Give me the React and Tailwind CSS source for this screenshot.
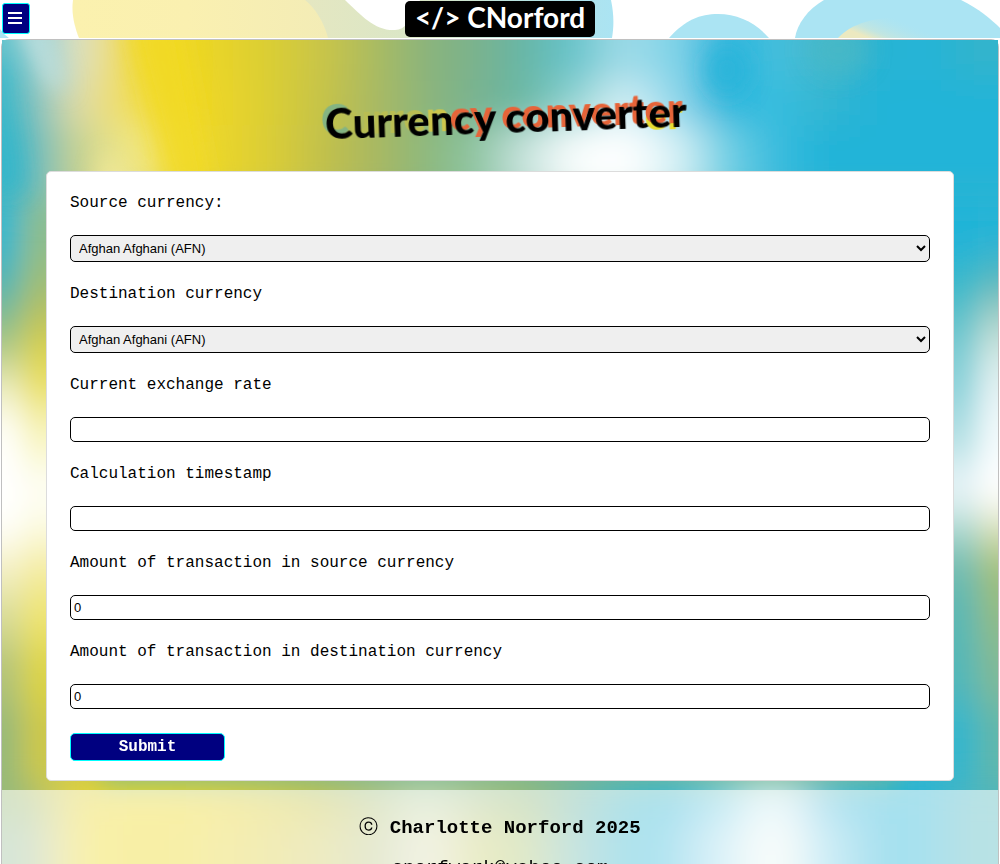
import React from "react";

const topRows = [
  {
    y: -60,
    h: 100,
    colors: ["#62c2cc", "#dfe2c4", "#f0da40", "#f0d924", "#e6d32c", "#d8cd36", "#c8c448", "#a9bb60", "#8ab47c", "#7ab28c", "#66b6a6", "#66c4cc", "#a0dce8", "#80d4e8", "#26b4dc", "#44c0de", "#44b8cc", "#2ab4d2", "#22b4d8", "#30b4cc"],
  },
  {
    y: 40,
    h: 45,
    colors: ["#58bcc4", "#e0dca8", "#f0de58", "#f2da20", "#ead42c", "#d8cd36", "#c4c24a", "#a9b962", "#8cb57a", "#78b290", "#68b8a4", "#90d4d4", "#d4eff5", "#90d8ea", "#28b6dc", "#38bee0", "#34b6d0", "#24b4d8", "#22b4d8", "#22b4d8"],
  },
  {
    y: 85,
    h: 75,
    colors: ["#40b8c6", "#c4d090", "#f0e88c", "#f2de38", "#e8d42a", "#d8cc38", "#c0c04c", "#a9b860", "#8cb87c", "#8cc4a0", "#c4e2dc", "#f8fdfd", "#ffffff", "#d8f2f6", "#70d0e4", "#38bcde", "#24b4d8", "#22b4d8", "#22b4d8", "#22b4d8"],
  },
];

const bottomRows = [
  {
    y: 740,
    h: 40,
    colors: ["#98ba78", "#e8d630", "#f2da20", "#f0d924", "#ead42c", "#dacd38", "#c6c344", "#b4c47c", "#c8dab0", "#b0c688", "#98ba70", "#68b4a0", "#38b6c8", "#2cb6d8", "#70d0e4", "#dcf4f8", "#48c0de", "#22b4d8", "#24b4d6", "#50b6bc"],
  },
  {
    y: 780,
    h: 120,
    colors: ["#9cc09c", "#eedb2e", "#ecd820", "#ecd820", "#e6d43a", "#dccf4c", "#d2ce68", "#bcc88c", "#e0e2c0", "#ccd070", "#b0c874", "#70bcb0", "#30b6d0", "#40bede", "#a8e0f0", "#f8fcf4", "#80d4ea", "#22b4d8", "#24b4d6", "#50b6bc"],
  },
];

const sides = [
  [130, 90, "#3ab8cc", "#8cbd90", "#22b4d8", "#26b4d6"],
  [220, 40, "#54b6b4", "#9cbe78", "#38b8ca", "#54b8bc"],
  [260, 35, "#84bc8c", "#bcc25c", "#60c2ca", "#a8d2c8"],
  [295, 35, "#b8cc84", "#dcd450", "#80cdd4", "#d0e8e4"],
  [330, 40, "#f0efc0", "#ece26c", "#90d4dc", "#e4f2f4"],
  [370, 50, "#fffffa", "#f8f5c0", "#b4e0e4", "#f2fafc"],
  [420, 50, "#ffffff", "#fefef4", "#e8f4f8", "#ffffff"],
  [470, 35, "#fffffa", "#fcfbe0", "#a8d8d0", "#d8e0b4"],
  [505, 45, "#f4f0c4", "#f4ecA0", "#70bcb0", "#a0c07c"],
  [550, 50, "#d8dc98", "#eee470", "#5cb8b4", "#90bc88"],
  [600, 60, "#b4c478", "#dcd448", "#54b8b8", "#80ba98"],
  [660, 140, "#98ba78", "#ccc84c", "#34b6cc", "#60b8ac"],
];

function Backdrop() {
  return (
    <svg
      className="absolute inset-0 -z-10 h-full w-full"
      viewBox="0 0 1000 860"
      preserveAspectRatio="none"
      aria-hidden="true"
    >
      <defs>
        <filter id="soft" x="-10%" y="-20%" width="120%" height="140%">
          <feGaussianBlur stdDeviation="23 17" />
        </filter>
        <filter id="softSide" x="-10%" y="-10%" width="120%" height="120%">
          <feGaussianBlur stdDeviation="13 20" />
        </filter>
        <filter id="glow" x="-50%" y="-50%" width="200%" height="200%">
          <feGaussianBlur stdDeviation="11" />
        </filter>
      </defs>
      <rect width="1000" height="860" fill="#7cb894" />
      <g filter="url(#softSide)">
        {sides.map(([y, h, a, b, c, d]) => (
          <g key={y}>
            <rect x="-60" y={y} width="80" height={h + 1} fill={a} />
            <rect x="20" y={y} width="80" height={h + 1} fill={b} />
            <rect x="900" y={y} width="80" height={h + 1} fill={c} />
            <rect x="980" y={y} width="80" height={h + 1} fill={d} />
          </g>
        ))}
      </g>
      {[topRows, bottomRows].map((rows, n) => (
        <g key={n} filter="url(#soft)">
          {rows.map((row) =>
            row.colors.map((c, i) => (
              <rect
                key={row.y + "-" + i}
                x={i === 0 ? -80 : i * 50}
                y={row.y}
                width={i === 0 ? 131 : i === 19 ? 140 : 51}
                height={row.h + 1}
                fill={c}
              />
            ))
          )}
        </g>
      ))}
      <g filter="url(#glow)">
        <path d="M8 -20H44L66 50L46 46Z" fill="#bfe0e0" opacity="0.9" />
        <path d="M-30 20H2L20 150H-30Z" fill="#36b7cc" opacity="0.8" />
        <path d="M104 110L150 160H88Z" fill="#f2ea98" opacity="0.8" />
        <path d="M125 -20H180L212 150H170Z" fill="#f2da20" opacity="0.75" />
        <ellipse cx="728" cy="30" rx="22" ry="26" fill="#26b4da" opacity="0.8" />
        <ellipse cx="840" cy="10" rx="30" ry="24" fill="#48b8c4" opacity="0.7" />
      </g>
    </svg>
  );
}

function HeaderArt() {
  return (
    <svg
      className="absolute inset-0 -z-10 h-full w-full"
      viewBox="0 0 1000 38"
      preserveAspectRatio="none"
      aria-hidden="true"
    >
      <defs>
        <linearGradient id="sun" x1="0" x2="1">
          <stop offset="0" stopColor="#fbf1ae" />
          <stop offset="0.45" stopColor="#faf0b0" />
          <stop offset="1" stopColor="#f3ecb6" />
        </linearGradient>
        <linearGradient id="meadow" x1="0" x2="1">
          <stop offset="0" stopColor="#e6e7c0" />
          <stop offset="0.45" stopColor="#d8e6c8" />
          <stop offset="0.75" stopColor="#b4e2e4" />
          <stop offset="1" stopColor="#abe4f3" />
        </linearGradient>
        <linearGradient id="arc" x1="0" x2="1" y1="0.4" y2="0">
          <stop offset="0" stopColor="#ece9c0" />
          <stop offset="0.15" stopColor="#c8e6dc" stopOpacity="0.8" />
          <stop offset="0.5" stopColor="#abe4f3" stopOpacity="0.2" />
          <stop offset="1" stopColor="#abe4f3" stopOpacity="0" />
        </linearGradient>
      </defs>
      <rect width="1000" height="38" fill="#ffffff" />
      <path d="M0 29 Q3 34 9 38 H0Z" fill="#abe4f3" />
      <path d="M290 0H345C362 16 375 31 395 30C405 30 412 20 420 0H611C614 14 614 26 612 38H290Z" fill="url(#meadow)" />
      <path d="M73 0H305C315 8 324 22 328 38H79C75 28 71 14 73 0Z" fill="url(#sun)" />
      <path d="M669 38C685 20 700 14 718 14C738 14 756 23 769 38Z" fill="#abe4f3" />
      <path d="M795 38C797 24 808 9 824 0H961C978 8 992 20 1000 28V38Z" fill="#abe4f3" />
      <path d="M838 38C852 22 880 16 910 17C936 19 955 28 966 38Z" fill="url(#arc)" />
    </svg>
  );
}

function Field({ id, label, children }) {
  return (
    <div className="mb-5 flex flex-col gap-5">
      <label htmlFor={id} className="leading-6">
        {label}
      </label>
      {children}
    </div>
  );
}

const inputClass =
  "h-[25px] w-full rounded-[5px] border border-black bg-white px-[3px] font-['Liberation_Sans',sans-serif] text-[13px] text-black";
const selectClass =
  "h-[27px] w-full rounded-[5px] border border-black bg-[#efefef] px-1 font-['Liberation_Sans',sans-serif] text-[13px] text-black";

const currencies = ["Afghan Afghani (AFN)"];

function CurrencySelect({ id }) {
  return (
    <select id={id} className={selectClass}>
      {currencies.map((c) => (
        <option key={c}>{c}</option>
      ))}
    </select>
  );
}

export default function App() {
  return (
    <div className="min-h-screen bg-white font-['Liberation_Mono',monospace] text-base text-black">
      <header className="relative isolate grid h-[38px] grid-cols-[1fr_auto_1fr] items-center px-0.5">
        <HeaderArt />
        <button
          type="button"
          aria-label="Menu"
          className="mt-[3px] flex h-[31px] w-7 flex-col items-center justify-center gap-[3px] self-start rounded-[3px] border border-[#00ffff] bg-[#000080] pb-0.5 pr-0.5"
        >
          <span className="h-0.5 w-3.5 bg-white" />
          <span className="h-0.5 w-3.5 bg-white" />
          <span className="h-0.5 w-3.5 bg-white" />
        </button>
        <a
          href="#home"
          className="flex h-9 w-[190px] items-center justify-center whitespace-nowrap rounded-[5px] bg-black pb-1 font-['Lato',sans-serif] text-[28px] font-bold text-white"
        >
          &lt;/&gt; CNorford
        </a>
      </header>

      <div className="relative isolate mx-px mt-px rounded-t-[8px] border border-b-0 border-[#c0c0c0]">
        <Backdrop />
        <main className="px-11 pb-[9px]">
          <h1 className="flex h-[131px] items-center justify-center pl-3 pt-6 font-['Lato',sans-serif] text-[42px] font-black">
            <span className="-rotate-2 whitespace-pre">
              <span className="[text-shadow:-4px_-4px_0_#84b482]">C</span>
              <span className="[text-shadow:-4px_-4px_0_#b9bd52]">urre</span>
              <span className="[text-shadow:-4px_-4px_0_#cdc64c]">n</span>
              <span className="[text-shadow:-4px_-4px_0_#e66439]">cy convert</span>
              <span className="[text-shadow:-4px_-4px_0_#e66439,-4px_2px_0_#e8dc30]">er</span>
            </span>
          </h1>

          <form
            className="rounded-[5px] border border-[#dcdcdc] bg-white px-[23px] py-[19px]"
            onSubmit={(e) => e.preventDefault()}
          >
            <Field id="source" label="Source currency:">
              <CurrencySelect id="source" />
            </Field>
            <Field id="destination" label="Destination currency">
              <CurrencySelect id="destination" />
            </Field>
            <Field id="rate" label="Current exchange rate">
              <input id="rate" type="text" className={inputClass} />
            </Field>
            <Field id="timestamp" label="Calculation timestamp">
              <input id="timestamp" type="text" className={inputClass} />
            </Field>
            <Field id="source-amount" label="Amount of transaction in source currency">
              <input id="source-amount" type="text" defaultValue="0" className={inputClass} />
            </Field>
            <Field id="destination-amount" label="Amount of transaction in destination currency">
              <input id="destination-amount" type="text" defaultValue="0" className={inputClass} />
            </Field>
            <button
              type="submit"
              className="mt-6 flex h-7 w-[155px] items-center justify-center rounded-[5px] border border-[#00ffff] bg-[#000080] font-bold text-white"
            >
              Submit
            </button>
          </form>
        </main>

        <footer className="flex flex-col items-center gap-4 bg-white/60 py-6 text-[19px] leading-6">
          <p className="font-bold">
            <span className="font-['DejaVu_Sans',sans-serif] font-normal">ⓒ</span> Charlotte Norford 2025
          </p>
          <a href="mailto:cnorfwork@yahoo.com">cnorfwork@yahoo.com</a>
        </footer>
      </div>
    </div>
  );
}
